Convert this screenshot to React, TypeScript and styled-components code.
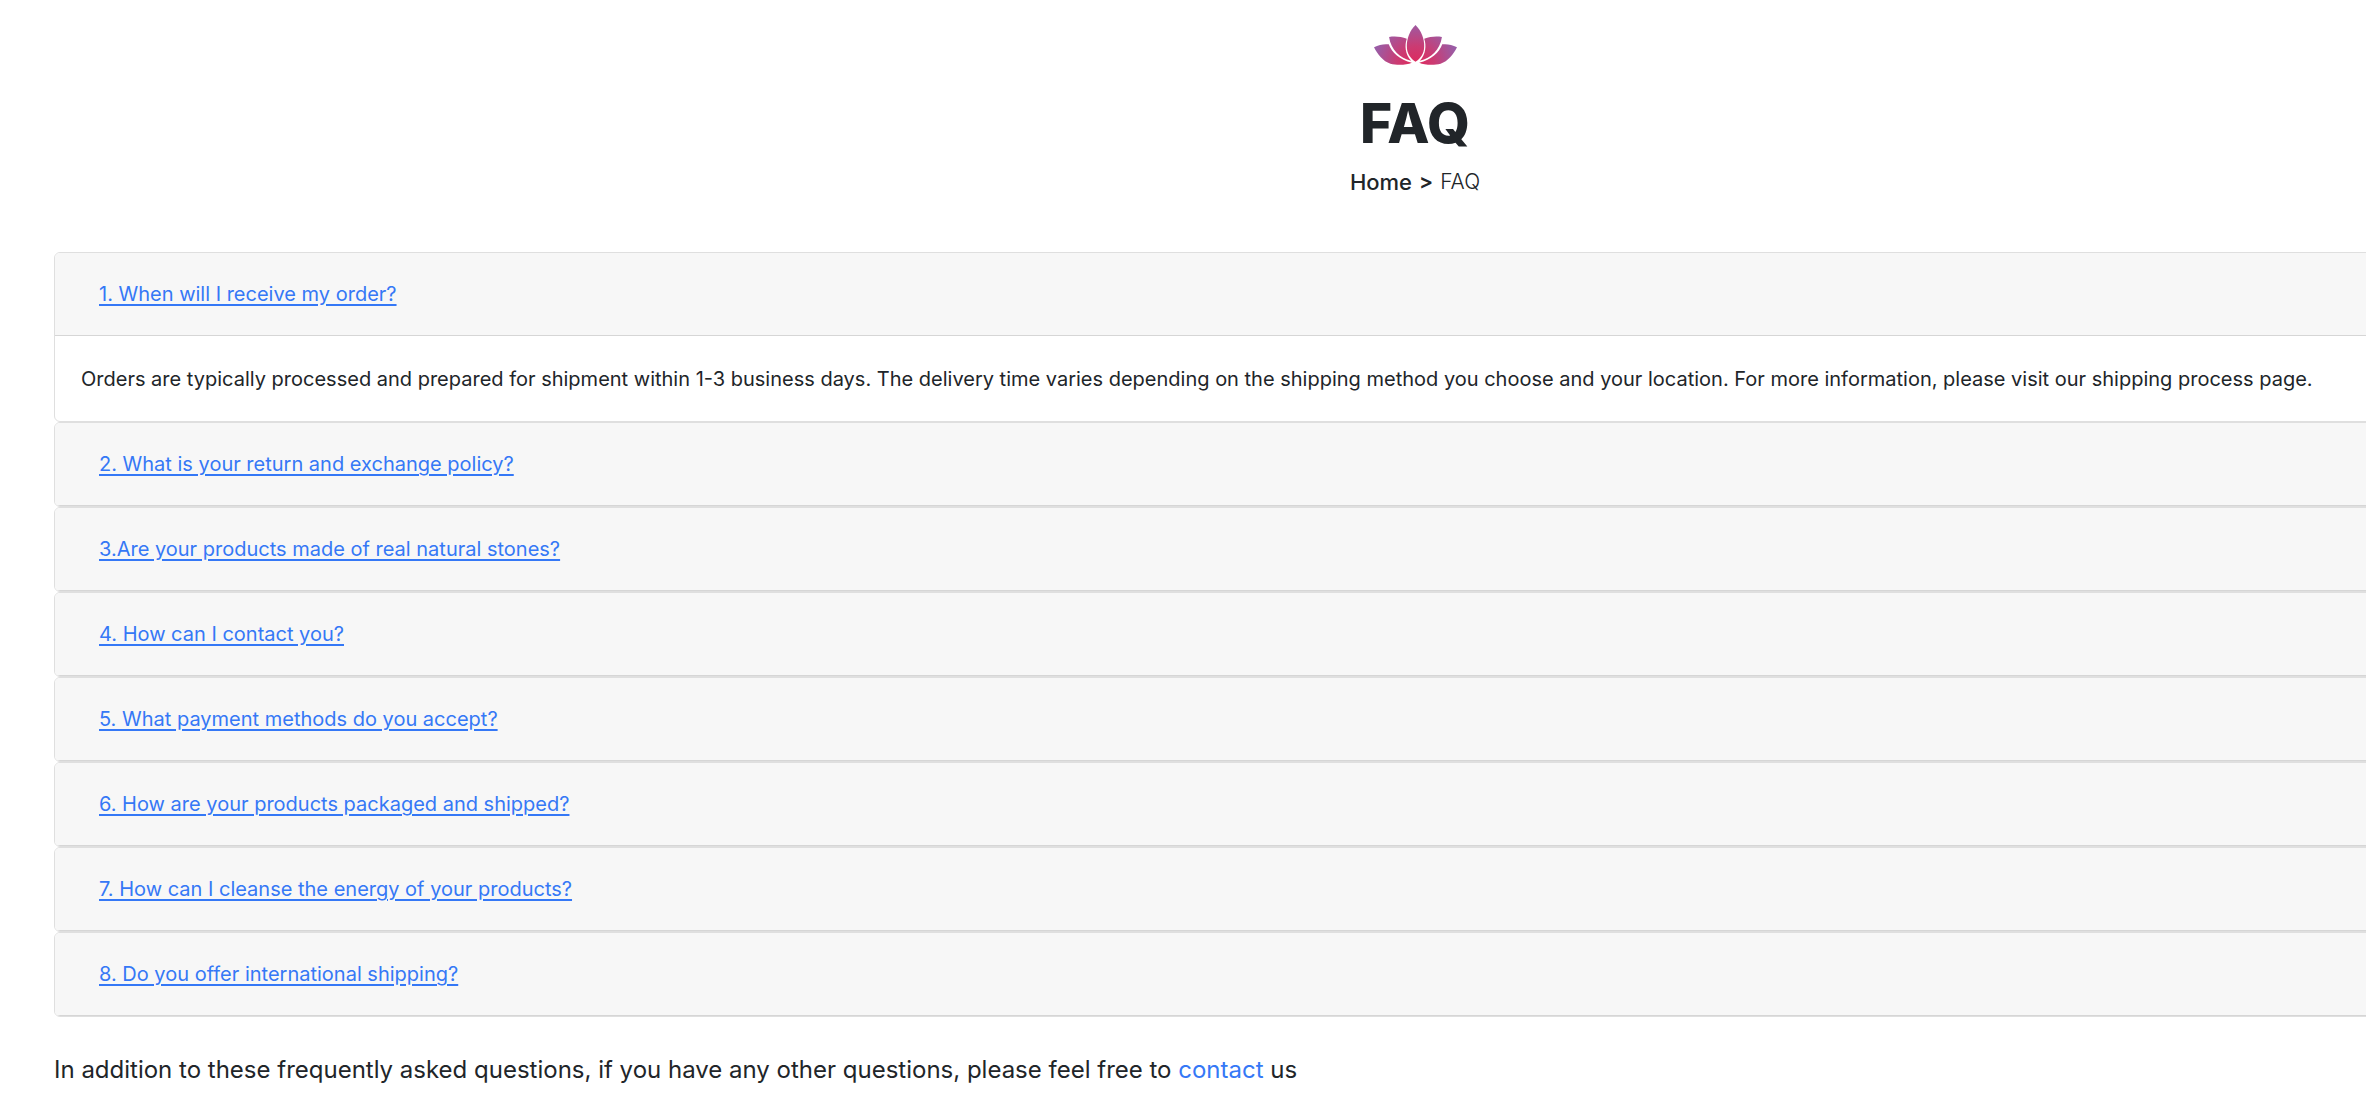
import React, { useState } from "react";
import styled, { createGlobalStyle } from "styled-components";

const GlobalStyle = createGlobalStyle`
  *, *::before, *::after { box-sizing: border-box; }
  body {
    margin: 0;
    background: #fff;
    color: #212529;
    font-family: Inter, "Liberation Sans", sans-serif;
    font-size: 20px;
    line-height: 32px;
  }
`;

const Viewport = styled.div`
  overflow-x: clip;
`;

const Page = styled.main`
  width: calc(100% + 464px);
  padding: 24px 54px 0;
`;

const Header = styled.header`
  display: flex;
  flex-direction: column;
  align-items: center;
  margin-bottom: 56px;
`;

const Title = styled.h1`
  margin: 25px 0 13px;
  font-size: 55px;
  line-height: 64px;
  font-weight: 800;
`;

const Breadcrumb = styled.nav`
  display: flex;
  gap: 7px;
  font-size: 21px;
  line-height: 28px;
  font-weight: 300;
`;

const HomeLink = styled.a`
  color: inherit;
  font-size: 22px;
  font-weight: 500;
  text-decoration: none;
`;

const Separator = styled.span`
  font-weight: 600;
`;

const Card = styled.section`
  border: 1px solid #dfdfdf;
  border-radius: 6px;
  background: #fff;
  overflow: hidden;
`;

const CardHeader = styled.h2`
  display: flex;
  margin: 0;
  padding: 11px 28px;
  background: #f7f7f7;
  border-bottom: 1px solid #d6d6d6;
  font-size: 20px;
  font-weight: 400;
`;

const Question = styled.button`
  padding: 14px 16px;
  border: 0;
  background: none;
  color: #3578f6;
  font: inherit;
  line-height: 32px;
  text-decoration: underline;
  text-decoration-thickness: 2px;
  text-underline-offset: 3px;
  cursor: pointer;
`;

const Answer = styled.p`
  margin: 0;
  padding: 27px 26px 26px;
`;

const Closing = styled.p`
  margin: 33px 0;
  font-size: 24px;
  line-height: 40px;
`;

const ContactLink = styled.a`
  color: #3578f6;
  text-decoration: none;
`;

const LotusSvg = styled.svg`
  display: block;
  width: 85px;
  height: 42px;
`;

const SidePetals = () => (
  <>
    <path d="M176 81 C194 78 212 80 229 86 C222 106 224 132 242 152 C208 144 182 120 176 81Z" />
    <path d="M131 112 C146 104 161 101 175 103 C184 128 208 150 244 158 C228 165 200 166 180 161 C158 154 142 134 131 112Z" />
  </>
);

const Lotus = () => (
  <LotusSvg viewBox="128 43 254 124" role="img" aria-label="Lotus">
    <defs>
      <radialGradient id="petal" gradientUnits="userSpaceOnUse" cx="255" cy="165" r="125">
        <stop offset="0" stopColor="#e0285c" />
        <stop offset="0.45" stopColor="#cb3b72" />
        <stop offset="1" stopColor="#9a5ca5" />
      </radialGradient>
    </defs>
    <g fill="url(#petal)">
      <path d="M255 45 C272 62 281 84 281 108 C281 130 270 146 255 155 C240 146 229 130 229 108 C229 84 238 62 255 45Z" />
      <SidePetals />
      <g transform="translate(510 0) scale(-1 1)">
        <SidePetals />
      </g>
    </g>
  </LotusSvg>
);

type Faq = { question: string; answer: string };

const faqs: Faq[] = [
  {
    question: "1. When will I receive my order?",
    answer:
      "Orders are typically processed and prepared for shipment within 1-3 business days. The delivery time varies depending on the shipping method you choose and your location. For more information, please visit our shipping process page.",
  },
  { question: "2. What is your return and exchange policy?", answer: "" },
  { question: "3.Are your products made of real natural stones?", answer: "" },
  { question: "4. How can I contact you?", answer: "" },
  { question: "5. What payment methods do you accept?", answer: "" },
  { question: "6. How are your products packaged and shipped?", answer: "" },
  { question: "7. How can I cleanse the energy of your products?", answer: "" },
  { question: "8. Do you offer international shipping?", answer: "" },
];

export default function App() {
  const [open, setOpen] = useState(0);
  return (
    <Viewport>
      <GlobalStyle />
      <Page>
        <Header>
          <Lotus />
          <Title>FAQ</Title>
          <Breadcrumb aria-label="Breadcrumb">
            <HomeLink href="#home">Home</HomeLink>
            <Separator>&gt;</Separator>
            <span>FAQ</span>
          </Breadcrumb>
        </Header>
        {faqs.map((faq, i) => (
          <Card key={faq.question}>
            <CardHeader>
              <Question
                type="button"
                aria-expanded={open === i}
                onClick={() => setOpen(open === i ? -1 : i)}
              >
                {faq.question}
              </Question>
            </CardHeader>
            {open === i && faq.answer && <Answer>{faq.answer}</Answer>}
          </Card>
        ))}
        <Closing>
          In addition to these frequently asked questions, if you have any other
          questions, please feel free to{" "}
          <ContactLink href="#contact">contact</ContactLink> us
        </Closing>
      </Page>
    </Viewport>
  );
}
